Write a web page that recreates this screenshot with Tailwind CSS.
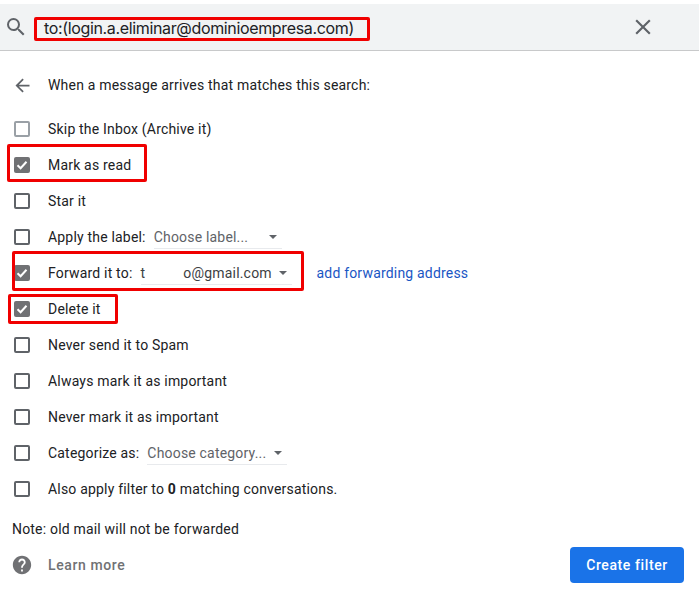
<!DOCTYPE html>
<html lang="en">
<head>
    <meta charset="UTF-8">
    <title>Create filter</title>
    <script src="https://cdn.jsdelivr.net/npm/@tailwindcss/browser@4"></script>
</head>
<body class="bg-white font-['Roboto',sans-serif] text-[14px] tracking-[0.19px] text-[#202124]">
<div class="relative w-[699px] h-[590px] overflow-hidden pt-[4px]">
    <!-- search bar -->
    <div class="h-[47px] bg-[#f1f3f4] border-b border-[#c8c9ca] flex items-center">
        <svg class="ml-[4px] w-[24px] h-[24px]" viewBox="0 0 24 24" fill="#5f6368"><path d="M15.5 14h-.79l-.28-.27A6.47 6.47 0 0 0 16 9.5 6.5 6.5 0 1 0 9.5 16c1.61 0 3.09-.59 4.23-1.57l.27.28v.79l5 4.99L20.49 19l-4.99-5zm-6 0C7.01 14 5 11.99 5 9.5S7.01 5 9.5 5 14 7.01 14 9.5 11.99 14 9.5 14z"/></svg>
        <span class="ml-[16px] mt-[1px] text-[16px] font-['Inter',sans-serif] tracking-[-0.35px]">to:(login.a.eliminar@dominioempresa.com)</span>
        <svg class="ml-auto mr-[43px] w-[26px] h-[26px]" viewBox="0 0 24 24" fill="#5f6368"><path d="M19 6.41 17.59 5 12 10.59 6.41 5 5 6.41 10.59 12 5 17.59 6.41 19 12 13.41 17.59 19 19 17.59 13.41 12z"/></svg>
    </div>

    <!-- title -->
    <div class="h-[36px] mt-[16px] flex items-center pl-[12px]">
        <svg class="w-[21px] h-[21px]" viewBox="0 0 24 24" fill="#5f6368"><path d="M20 11H7.83l5.59-5.59L12 4l-8 8 8 8 1.41-1.41L7.83 13H20v-2z"/></svg>
        <span class="ml-[15px]">When a message arrives that matches this search:</span>
    </div>

    <!-- options -->
    <div class="mt-[8px] flex flex-col">
        <div class="h-[36px] flex items-center pl-[14px]">
            <span class="w-[16px] h-[16px] rounded-[2px] border-2 border-[#9aa0a6]"></span>
            <span class="ml-[18px]">Skip the Inbox (Archive it)</span>
        </div>
        <div class="h-[36px] flex items-center pl-[14px]">
            <span class="w-[16px] h-[16px] rounded-[2px] bg-[#707174] flex items-center justify-center">
                <svg class="w-[14px] h-[14px]" viewBox="0 0 14 14" fill="none" stroke="#fff" stroke-width="2"><path d="M2.5 7.2 5.6 10.2 11.5 3.8"/></svg>
            </span>
            <span class="ml-[18px]">Mark as read</span>
        </div>
        <div class="h-[36px] flex items-center pl-[14px]">
            <span class="w-[16px] h-[16px] rounded-[2px] border-2 border-[#5f6368]"></span>
            <span class="ml-[18px]">Star it</span>
        </div>
        <div class="h-[36px] flex items-center pl-[14px]">
            <span class="w-[16px] h-[16px] rounded-[2px] border-2 border-[#5f6368]"></span>
            <span class="ml-[18px]">Apply the label:</span>
            <div class="ml-[8px] w-[128px] h-[24px] pt-[1px] border-b border-[#e8eaed] flex items-center justify-between pr-[5px] text-[#5f6368]">
                <span>Choose label...</span>
                <span class="w-0 h-0 border-x-[4px] border-x-transparent border-t-[4px] border-t-[#5f6368]"></span>
            </div>
        </div>
        <div class="h-[36px] flex items-center pl-[14px]">
            <span class="w-[16px] h-[16px] rounded-[2px] bg-[#707174] flex items-center justify-center">
                <svg class="w-[14px] h-[14px]" viewBox="0 0 14 14" fill="none" stroke="#fff" stroke-width="2"><path d="M2.5 7.2 5.6 10.2 11.5 3.8"/></svg>
            </span>
            <span class="ml-[18px]">Forward it to:</span>
            <div class="ml-[8px] w-[151px] h-[24px] pt-[1px] border-b border-[#e8eaed] flex items-center justify-between pr-[5px] text-[#3c4043]">
                <span>t<span class="inline-block w-[38px]"></span>o@gmail.com</span>
                <span class="w-0 h-0 border-x-[4px] border-x-transparent border-t-[4px] border-t-[#5f6368]"></span>
            </div>
            <span class="ml-[25px] text-[#1a56c4]">add forwarding address</span>
        </div>
        <div class="h-[36px] flex items-center pl-[14px]">
            <span class="w-[16px] h-[16px] rounded-[2px] bg-[#707174] flex items-center justify-center">
                <svg class="w-[14px] h-[14px]" viewBox="0 0 14 14" fill="none" stroke="#fff" stroke-width="2"><path d="M2.5 7.2 5.6 10.2 11.5 3.8"/></svg>
            </span>
            <span class="ml-[18px]">Delete it</span>
        </div>
        <div class="h-[36px] flex items-center pl-[14px]">
            <span class="w-[16px] h-[16px] rounded-[2px] border-2 border-[#5f6368]"></span>
            <span class="ml-[18px]">Never send it to Spam</span>
        </div>
        <div class="h-[36px] flex items-center pl-[14px]">
            <span class="w-[16px] h-[16px] rounded-[2px] border-2 border-[#5f6368]"></span>
            <span class="ml-[18px]">Always mark it as important</span>
        </div>
        <div class="h-[36px] flex items-center pl-[14px]">
            <span class="w-[16px] h-[16px] rounded-[2px] border-2 border-[#5f6368]"></span>
            <span class="ml-[18px]">Never mark it as important</span>
        </div>
        <div class="h-[36px] flex items-center pl-[14px]">
            <span class="w-[16px] h-[16px] rounded-[2px] border-2 border-[#5f6368]"></span>
            <span class="ml-[18px]">Categorize as:</span>
            <div class="ml-[8px] w-[140px] h-[24px] pt-[1px] border-b border-[#e8eaed] flex items-center justify-between pr-[5px] text-[#5f6368]">
                <span>Choose category...</span>
                <span class="w-0 h-0 border-x-[4px] border-x-transparent border-t-[4px] border-t-[#5f6368]"></span>
            </div>
        </div>
        <div class="h-[36px] flex items-center pl-[14px]">
            <span class="w-[16px] h-[16px] rounded-[2px] border-2 border-[#5f6368]"></span>
            <span class="ml-[18px]">Also apply filter to <b class="font-bold">0</b> matching conversations.</span>
        </div>
    </div>

    <p class="mt-[12px] ml-[12px] leading-[20px]">Note: old mail will not be forwarded</p>

    <!-- footer -->
    <div class="mt-[8px] flex items-center h-[36px] pl-[11px] pr-[15px]">
        <svg class="w-[22px] h-[22px]" viewBox="0 0 24 24" fill="#707174"><path d="M12 2C6.48 2 2 6.48 2 12s4.48 10 10 10 10-4.48 10-10S17.52 2 12 2zm1 17h-2v-2h2v2zm2.07-7.75-.9.92C13.45 12.9 13 13.5 13 15h-2v-.5c0-1.1.45-2.1 1.17-2.83l1.24-1.26c.37-.36.59-.86.59-1.41 0-1.1-.9-2-2-2s-2 .9-2 2H8c0-2.21 1.79-4 4-4s4 1.79 4 4c0 .88-.36 1.68-.93 2.25z"/></svg>
        <span class="ml-[15px] font-medium tracking-[0.6px] text-[#707174]">Learn more</span>
        <button class="ml-auto w-[114px] h-[36px] rounded-[4px] bg-[#1a73e8] text-white font-medium tracking-[0.6px]">Create filter</button>
    </div>

    <!-- red annotation boxes -->
    <div class="absolute left-[34px] top-[17px] w-[336px] h-[24px] border-[3px] border-[#f00000] rounded-[2px]"></div>
    <div class="absolute left-[7px] top-[144px] w-[140px] h-[38px] border-[3px] border-[#f00000] rounded-[2px]"></div>
    <div class="absolute left-[12px] top-[251px] w-[292px] h-[40px] border-[3px] border-[#f00000] rounded-[2px]"></div>
    <div class="absolute left-[8px] top-[294px] w-[110px] h-[30px] border-[3px] border-[#f00000] rounded-[2px]"></div>
</div>
</body>
</html>
